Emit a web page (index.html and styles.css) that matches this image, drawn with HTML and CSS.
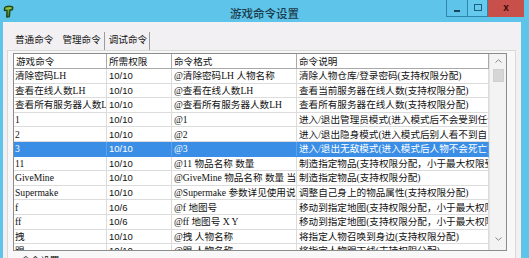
FILE: index.html
```html
<!DOCTYPE html>
<html lang="zh-CN">
<head>
<meta charset="utf-8">
<title>游戏命令设置</title>
<link rel="stylesheet" href="styles.css">
</head>
<body>
<div class="window">
  <div class="titlebar">
    <div class="app-icon">
      <svg width="11" height="13" viewBox="0 0 11 13">
        <path d="M1.5 2.5 C3 0.8 8 0.6 10 2 L9.5 5 L7 5.2 L6.6 11.8 L3.6 12.2 L4 5.6 L1.2 5.6 Z" fill="#3f7a22" stroke="#1f330c" stroke-width="1"/>
        <path d="M2.6 3 C4 2 7 2 8.6 2.6 L8.4 4 L5.6 4.2 L5.2 10.8 L4.8 4.6 L2.6 4.6 Z" fill="#93c447"/>
      </svg>
    </div>
    <div class="title">游戏命令设置</div>
    <div class="controls">
      <div class="btn min"><span class="dash"></span></div>
      <div class="btn max"><span class="box"></span></div>
      <div class="btn close">x</div>
    </div>
  </div>
  <div class="client">
    <div class="tabs">
      <span class="tab t1">普通命令</span>
      <span class="tab t2 active">管理命令</span>
      <span class="sep s1"></span>
      <span class="tab t3">调试命令</span>
      <span class="sep"></span>
    </div>
    <div class="panel">
      <div class="listview">
        <div class="grid">
          <div class="row head">
            <div class="cell c1">游戏命令</div>
            <div class="cell c2">所需权限</div>
            <div class="cell c3">命令格式</div>
            <div class="cell c4">命令说明</div>
          </div>
          <div class="row">
            <div class="cell c1">清除密码LH</div>
            <div class="cell c2">10/10</div>
            <div class="cell c3">@清除密码LH 人物名称</div>
            <div class="cell c4">清除人物仓库/登录密码(支持权限分配)</div>
          </div>
          <div class="row">
            <div class="cell c1">查看在线人数LH</div>
            <div class="cell c2">10/10</div>
            <div class="cell c3">@查看在线人数LH</div>
            <div class="cell c4">查看当前服务器在线人数(支持权限分配)</div>
          </div>
          <div class="row">
            <div class="cell c1">查看所有服务器人数LH</div>
            <div class="cell c2">10/10</div>
            <div class="cell c3">@查看所有服务器人数LH</div>
            <div class="cell c4">查看所有服务器在线人数(支持权限分配)</div>
          </div>
          <div class="row">
            <div class="cell c1">1</div>
            <div class="cell c2">10/10</div>
            <div class="cell c3">@1</div>
            <div class="cell c4">进入/退出管理员模式(进入模式后不会受到任何伤害)</div>
          </div>
          <div class="row">
            <div class="cell c1">2</div>
            <div class="cell c2">10/10</div>
            <div class="cell c3">@2</div>
            <div class="cell c4">进入/退出隐身模式(进入模式后别人看不到自己)</div>
          </div>
          <div class="row selected">
            <div class="cell c1">3</div>
            <div class="cell c2">10/10</div>
            <div class="cell c3">@3</div>
            <div class="cell c4">进入/退出无敌模式(进入模式后人物不会死亡)</div>
          </div>
          <div class="row">
            <div class="cell c1">11</div>
            <div class="cell c2">10/10</div>
            <div class="cell c3">@11 物品名称 数量</div>
            <div class="cell c4">制造指定物品(支持权限分配，小于最大权限受限制)</div>
          </div>
          <div class="row">
            <div class="cell c1">GiveMine</div>
            <div class="cell c2">10/10</div>
            <div class="cell c3">@GiveMine 物品名称 数量 当前数量</div>
            <div class="cell c4">制造指定物品(支持权限分配)</div>
          </div>
          <div class="row">
            <div class="cell c1">Supermake</div>
            <div class="cell c2">10/10</div>
            <div class="cell c3">@Supermake 参数详见使用说明</div>
            <div class="cell c4">调整自己身上的物品属性(支持权限分配)</div>
          </div>
          <div class="row">
            <div class="cell c1">f</div>
            <div class="cell c2">10/6</div>
            <div class="cell c3">@f 地图号</div>
            <div class="cell c4">移动到指定地图(支持权限分配，小于最大权限受限制)</div>
          </div>
          <div class="row">
            <div class="cell c1">ff</div>
            <div class="cell c2">10/6</div>
            <div class="cell c3">@ff 地图号 X Y</div>
            <div class="cell c4">移动到指定地图(支持权限分配，小于最大权限受限制)</div>
          </div>
          <div class="row">
            <div class="cell c1">拽</div>
            <div class="cell c2">10/10</div>
            <div class="cell c3">@拽 人物名称</div>
            <div class="cell c4">将指定人物召唤到身边(支持权限分配)</div>
          </div>
          <div class="row">
            <div class="cell c1">踢</div>
            <div class="cell c2">10/10</div>
            <div class="cell c3">@踢 人物名称</div>
            <div class="cell c4">将指定人物踢下线(支持权限分配)</div>
          </div>
        </div>
        <div class="scrollbar">
          <div class="arrow up">
            <svg width="7" height="4" viewBox="0 0 7 4"><path d="M0.5 3.5 L3.5 0.8 L6.5 3.5" fill="none" stroke="#8a8a8a" stroke-width="1"/></svg>
          </div>
          <div class="thumb"></div>
          <div class="track"></div>
          <div class="arrow down">
            <svg width="7" height="4" viewBox="0 0 7 4"><path d="M0.5 0.5 L3.5 3.2 L6.5 0.5" fill="none" stroke="#8a8a8a" stroke-width="1"/></svg>
          </div>
        </div>
      </div>
      <div class="group-label">命令设置</div>
    </div>
  </div>
</div>
</body>
</html>
```

FILE: styles.css
```css
* {
  box-sizing: border-box;
}

html, body {
  margin: 0;
  padding: 0;
}

body {
  width: 529px;
  height: 258px;
  overflow: hidden;
  background: #5ec4ea;
  font-family: "Noto Sans CJK SC", sans-serif;
}

.window {
  display: flex;
  flex-direction: column;
  height: 258px;
}

/* title bar */
.titlebar {
  height: 22px;
  flex: none;
  display: grid;
  grid-template-columns: 1fr auto 1fr;
  align-items: center;
}

.app-icon {
  margin-left: 3px;
  margin-top: 1px;
  width: 11px;
  height: 13px;
  display: flex;
}

.title {
  font-size: 11.5px;
  line-height: 14px;
  padding-top: 3px;
  color: #1b3b4b;
  font-weight: 500;
  white-space: nowrap;
}

.controls {
  justify-self: end;
  align-self: start;
  display: flex;
  margin-right: 5px;
  height: 17px;
}

.btn {
  height: 17px;
  display: flex;
  align-items: center;
  justify-content: center;
}

.min,
.max {
  width: 21px;
  border: 1px solid #2f86ad;
  border-top: none;
}

.min {
  border-right: none;
}

.max {
  background: #66c9ee;
}

.dash {
  width: 6px;
  height: 2px;
  background: #17465c;
  margin-top: 6px;
}

.box {
  width: 8px;
  height: 7px;
  border: 1.5px solid #1f5f7d;
  margin-top: -1px;
}

.close {
  width: 36px;
  background: #c7504a;
  color: #3a0c0a;
  font-family: "Liberation Sans", sans-serif;
  font-size: 10px;
  font-weight: bold;
  line-height: 10px;
  padding-bottom: 1px;
}

/* client area */
.client {
  flex: 1;
  min-height: 0;
  margin: 0 8px 0 3px;
  background: #f2f0f2;
  display: flex;
  flex-direction: column;
}

.tabs {
  height: 28px;
  flex: none;
  display: flex;
  align-items: flex-end;
  padding-left: 12px;
}

.tab {
  font-size: 9.6px;
  line-height: 14px;
  padding-bottom: 4px;
  color: #111;
  white-space: nowrap;
}

.t1 {
  margin-right: 9px;
}

.t2 {
  margin-right: 3px;
}

.t3 {
  margin-right: 2px;
}

.sep {
  width: 1px;
  height: 18px;
  background: #9c9c9c;
}

.s1 {
  margin-right: 4px;
}

.panel {
  flex: 1;
  min-height: 0;
  margin: 0 5px 0 4px;
  border: 1px solid #d9d9d9;
  border-bottom: none;
  background: #f8f8f8;
  padding: 2px 8px 0 5px;
  display: flex;
  flex-direction: column;
  overflow: hidden;
}

/* list view */
.listview {
  height: 198px;
  flex: none;
  border: 1px solid #8c8c8c;
  background: #fff;
  display: flex;
  overflow: hidden;
}

.grid {
  width: 475px;
  flex: none;
  overflow: hidden;
  font-family: "Liberation Serif", "Noto Sans CJK SC", serif;
  font-size: 9.6px;
  color: #111;
}

.row {
  display: flex;
  height: 14.6px;
  border-bottom: 1px solid #dcdcdc;
}

.row.head {
  height: 15px;
  border-bottom: 1px solid #a9a9a9;
  font-family: "Noto Sans CJK SC", sans-serif;
}

.cell {
  display: flex;
  align-items: center;
  padding-left: 2px;
  border-right: 1px solid #dcdcdc;
  white-space: nowrap;
  overflow: hidden;
  line-height: 13px;
}

.head .cell {
  border-right-color: #a9a9a9;
  padding-left: 2px;
}

.c1 { width: 93px; flex: none; padding-left: 1px; }
.c2 { width: 65px; flex: none; font-family: "Liberation Sans", sans-serif; font-size: 9.5px; }
.c3 { width: 125px; flex: none; }
.c4 { width: 192px; flex: none; }

.head .c2 {
  font-family: "Noto Sans CJK SC", sans-serif;
  font-size: 9.6px;
}

.row.selected {
  background: #3a8ee6;
  color: #fff;
  border-bottom-color: #3a8ee6;
}

.row.selected .cell {
  border-right-color: #5aa2ea;
}

/* scrollbar */
.scrollbar {
  flex: 1;
  border-left: 1px solid #e4e4e4;
  background: #f3f3f3;
  display: flex;
  flex-direction: column;
}

.arrow {
  height: 14px;
  flex: none;
  display: flex;
  align-items: center;
  justify-content: center;
}

.arrow.down {
  margin-bottom: 4px;
}

.thumb {
  height: 13px;
  flex: none;
  margin: 1px 2px 0 3px;
  background: #d6d6d6;
  border: 1px solid #cfcfcf;
}

.track {
  flex: 1;
}

.group-label {
  margin-top: 3px;
  padding-left: 8px;
  font-size: 9.6px;
  line-height: 12px;
  color: #111;
  white-space: nowrap;
}
```
